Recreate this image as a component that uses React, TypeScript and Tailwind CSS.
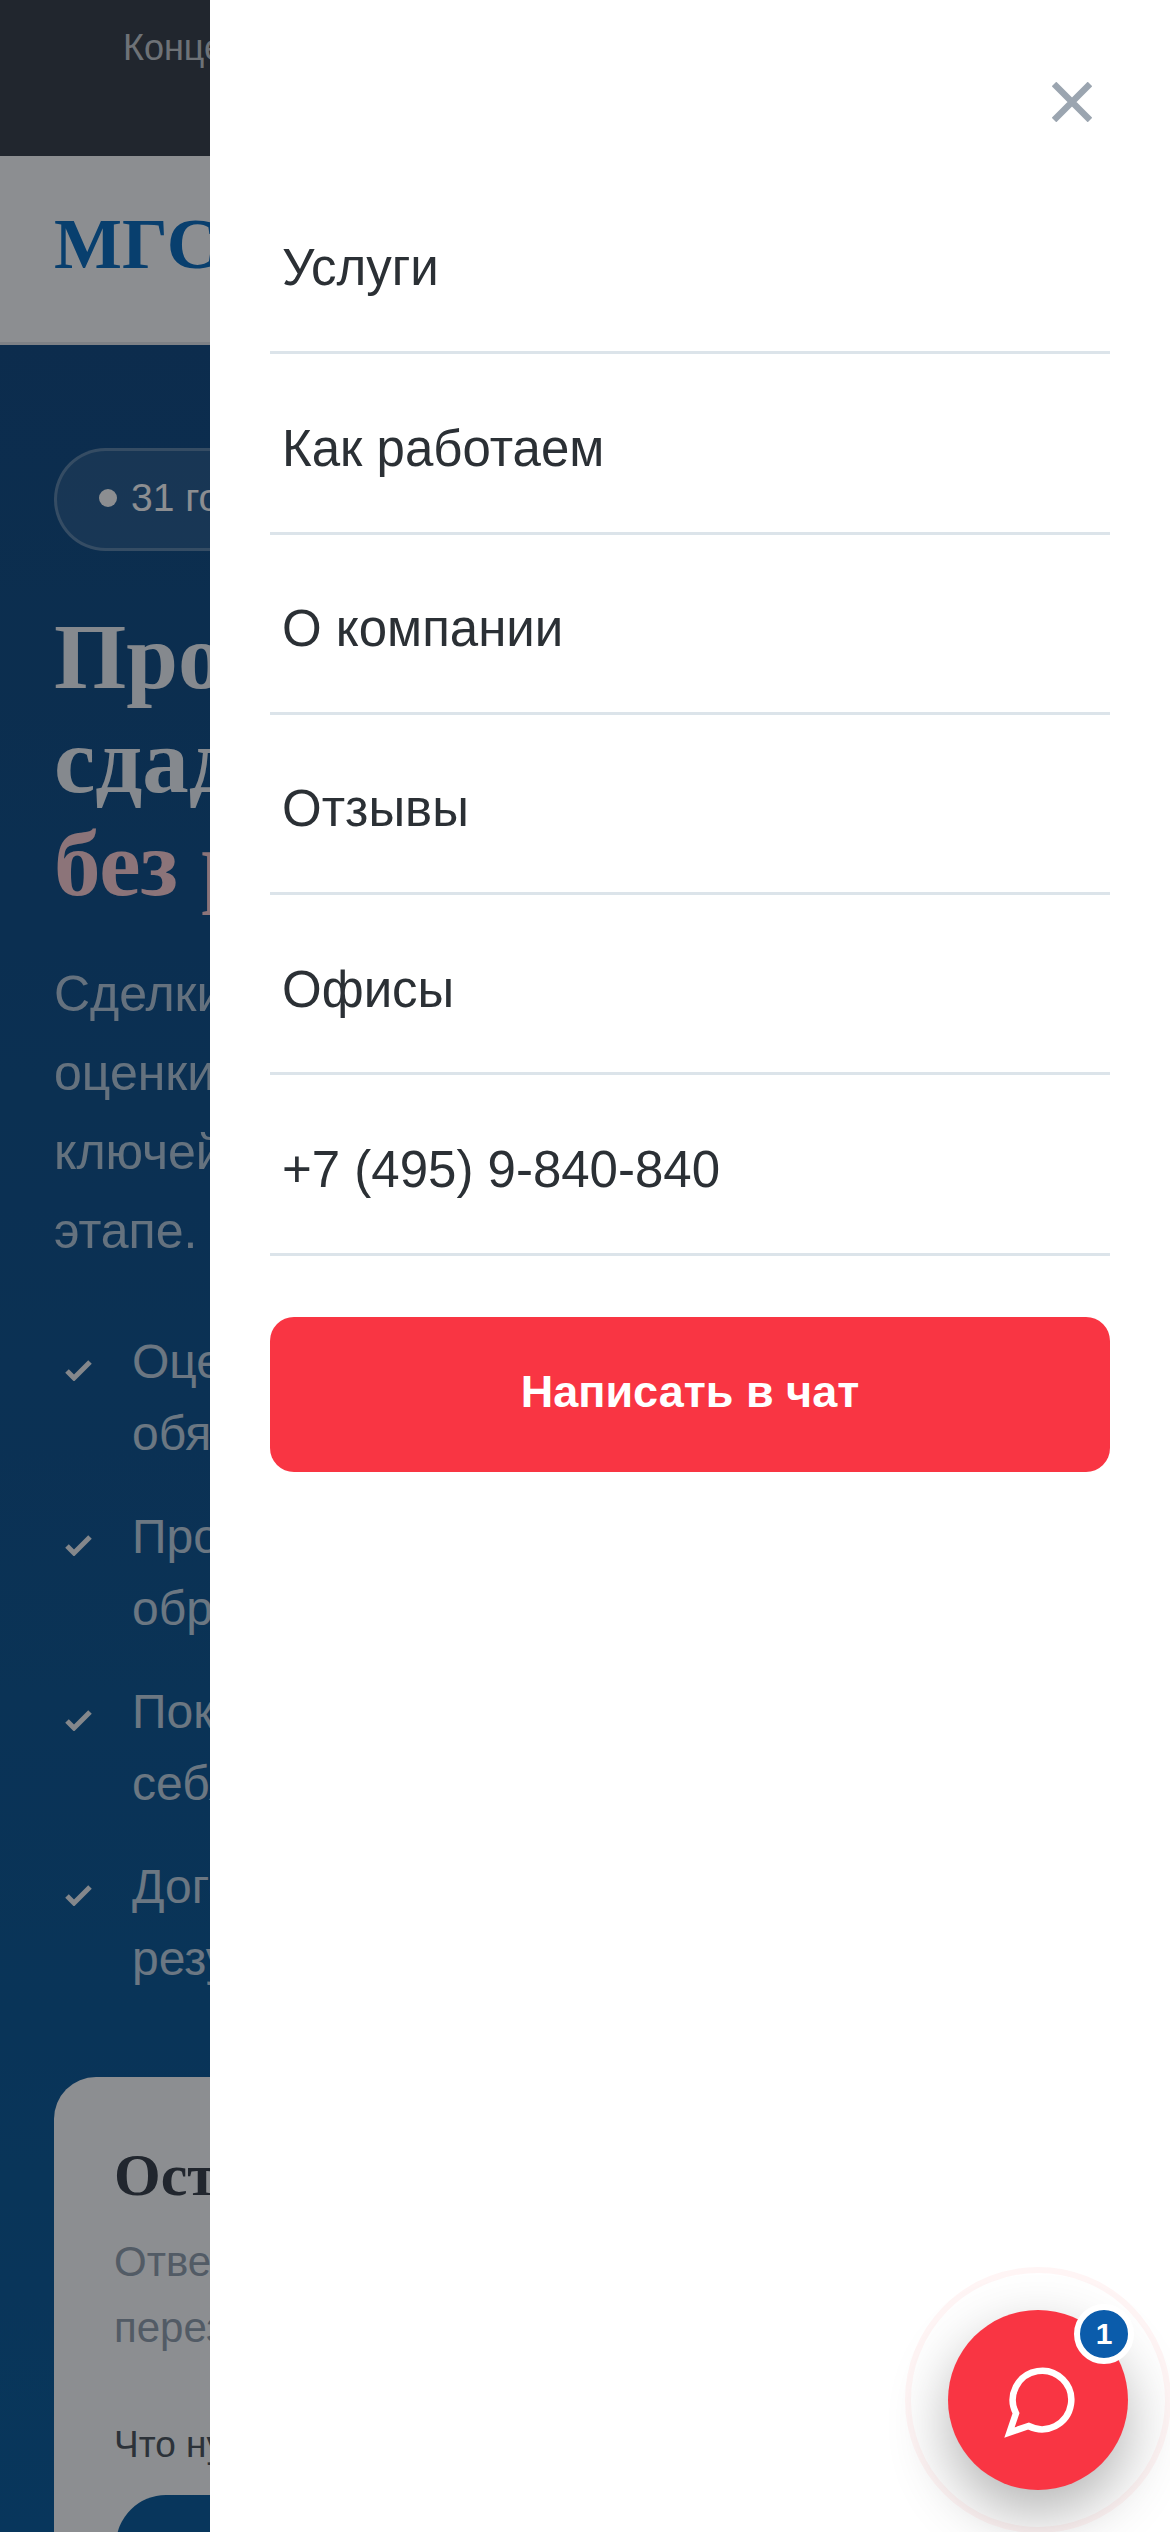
const sans = 'font-["Liberation_Sans",Arial,sans-serif]';
const serif = 'font-["Liberation_Serif","Times_New_Roman",serif]';

const NAV_ITEMS = ['Услуги', 'Как работаем', 'О компании', 'Отзывы', 'Офисы', '+7 (495) 9-840-840'];

const CHECKS = [
  ['Оценка квартиры бесплатно и без', 'обязательств'],
  ['Проверка документов и полное', 'обращение сделки'],
  ['Покупателя находим и проверяем', 'себя сами'],
  ['Договор с фиксацией цены и', 'результата'],
];

function CheckIcon() {
  return (
    <svg width="27" height="22" viewBox="0 0 27 22" fill="none" aria-hidden className="mt-[33px] shrink-0">
      <path d="M2 12l7 7L25 3" stroke="#f1f3f5" strokeWidth="5" />
    </svg>
  );
}

function BackgroundPage() {
  return (
    <div className="flex h-full flex-col">
      <div className="h-[156px] shrink-0 bg-[#3c434b] pl-[123px] pt-[27px] text-[36px] leading-[42px] whitespace-nowrap text-[#c8ccd0]">
        Концепция сервиса
      </div>
      <div className="flex h-[189px] shrink-0 items-center border-b-[3px] border-[#e5e7eb] bg-white pb-[10px] pl-[54px]">
        <span className={`${serif} text-[72px] leading-none font-bold text-[#0f6fc0]`}>МГСН</span>
      </div>
      <div className="flex-1 overflow-hidden bg-gradient-to-b from-[#164e84] to-[#10609e] px-[54px] pt-[103px]">
        <div className="inline-flex h-[103px] items-center gap-[14px] rounded-full border-[3px] border-white/25 bg-white/10 pb-[3px] pl-[42px] pr-[42px] text-[39px] whitespace-nowrap text-white">
          <span className="h-[18px] w-[18px] rounded-full bg-white" />
          31 год на рынке
        </div>
        <h1 className={`${serif} mt-[54px] text-[93px] leading-[103.5px] font-bold whitespace-nowrap text-white/95`}>
          Продать квартиру
          <br />
          сдадим под ключ
          <br />
          <span className="text-[#ffd0d4]">без риска</span>
        </h1>
        <p className="mt-[39px] text-[50px] leading-[79px] whitespace-nowrap text-white/70">
          Сделки от оценки
          <br />
          оценки до передачи
          <br />
          ключей на каждом
          <br />
          этапе.
        </p>
        <ul className="mt-[55px] flex flex-col gap-[31px]">
          {CHECKS.map((lines) => (
            <li key={lines[0]} className="flex gap-[40px] pl-[11px]">
              <CheckIcon />
              <div className="text-[48px] leading-[72px] whitespace-nowrap text-white/75">
                {lines[0]}
                <br />
                {lines[1]}
              </div>
            </li>
          ))}
        </ul>
        <div className="mt-[82px] h-[600px] rounded-[42px] bg-white px-[62px] pt-[62px]">
          <h2 className={`${serif} -ml-[2px] text-[60px] leading-[72px] font-bold whitespace-nowrap text-[#3c434b]`}>Оставить заявку</h2>
          <p className="-ml-[2px] mt-[18px] text-[42px] leading-[66px] whitespace-nowrap text-[#95a2b0]">
            Ответим и поможем
            <br />
            перезвоним сами
          </p>
          <div className="-ml-[2px] mt-[60px] text-[37px] leading-[48px] whitespace-nowrap text-[#505860]">Что нужно сделать</div>
          <div className="mt-[26px] h-[150px] w-[600px] rounded-[50px] bg-[#10609e]" />
        </div>
      </div>
    </div>
  );
}

function Drawer() {
  return (
    <aside className="absolute inset-y-0 right-0 w-[960px] bg-white px-[60px]">
      <div className="flex h-[174px] items-start justify-end pt-[82px] pr-[18px]">
        <svg width="40" height="40" viewBox="0 0 40 40" fill="none" aria-label="Закрыть">
          <path d="M2 2l36 36M38 2L2 38" stroke="#9ba5b0" strokeWidth="6.5" />
        </svg>
      </div>
      <nav className="flex flex-col">
        {NAV_ITEMS.map((item) => (
          <a
            key={item}
            className="flex h-[180.3px] items-center border-b-[3px] border-[#dce4ea] px-3 pt-[12px] text-[51px] text-[#2b3035]"
          >
            {item}
          </a>
        ))}
      </nav>
      <button
        type="button"
        className="mt-[61px] h-[155px] w-full rounded-[24px] bg-[#f93543] pb-[6px] text-[45px] font-bold text-white"
      >
        Написать в чат
      </button>
    </aside>
  );
}

function ChatFab() {
  return (
    <div className="absolute left-[948px] top-[2310px] h-[180px] w-[180px]">
      <span className="absolute -inset-[43px] rounded-full border-[6px] border-[#f93543]/[0.05]" />
      <button
        type="button"
        aria-label="Чат"
        className="relative flex h-full w-full items-center justify-center rounded-full bg-[#f93543] shadow-[0_24px_60px_rgba(0,0,0,0.3)]"
      >
        <svg width="78" height="78" viewBox="0 0 24 24" fill="none" stroke="#fff" strokeWidth="2" aria-hidden className="translate-x-[4px]">
          <path d="M7.9 20A9 9 0 1 0 4 16.1L2 22Z" />
        </svg>
      </button>
      <span className="absolute -right-[6px] -top-[6px] flex h-[60px] w-[60px] items-center justify-center rounded-full border-[6px] border-white bg-[#0b5cab] text-[30px] leading-none font-bold text-white">
        1
      </span>
    </div>
  );
}

export default function App() {
  return (
    <div className={`${sans} relative h-[2532px] w-[1170px] overflow-hidden bg-white`}>
      <BackgroundPage />
      <div className="absolute inset-0 bg-[rgba(0,5,12,0.45)]" />
      <Drawer />
      <ChatFab />
    </div>
  );
}
